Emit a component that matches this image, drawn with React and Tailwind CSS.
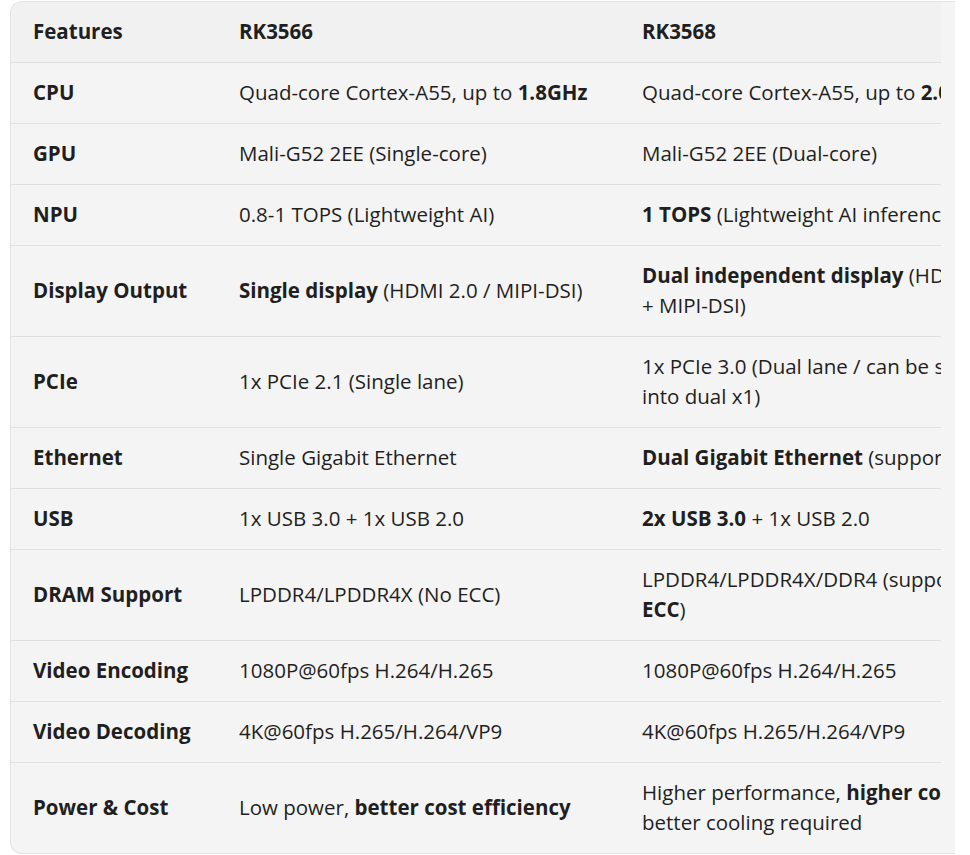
import React from 'react';

const rows = [
  {
    feature: 'CPU',
    a: <>Quad-core Cortex-A55, up to <b className="font-bold">1.8GHz</b></>,
    b: <>Quad-core Cortex-A55, up to <b className="font-bold">2.0GHz</b></>,
  },
  { feature: 'GPU', a: 'Mali-G52 2EE (Single-core)', b: 'Mali-G52 2EE (Dual-core)' },
  {
    feature: 'NPU',
    a: '0.8-1 TOPS (Lightweight AI)',
    b: <><b className="font-bold">1 TOPS</b> (Lightweight AI inference)</>,
  },
  {
    feature: 'Display Output',
    a: <><b className="font-bold">Single display</b> (HDMI 2.0 / MIPI-DSI)</>,
    b: <><b className="font-bold">Dual independent display</b> (HDMI 2.0<br />+ MIPI-DSI)</>,
  },
  {
    feature: 'PCIe',
    a: '1x PCIe 2.1 (Single lane)',
    b: <>1x PCIe 3.0 (Dual lane / can be split<br />into dual x1)</>,
  },
  {
    feature: 'Ethernet',
    a: 'Single Gigabit Ethernet',
    b: <><b className="font-bold">Dual Gigabit Ethernet</b> (supports TSN)</>,
  },
  {
    feature: 'USB',
    a: '1x USB 3.0 + 1x USB 2.0',
    b: <><b className="font-bold">2x USB 3.0</b> + 1x USB 2.0</>,
  },
  {
    feature: 'DRAM Support',
    a: 'LPDDR4/LPDDR4X (No ECC)',
    b: <>LPDDR4/LPDDR4X/DDR4 (supports<br /><b className="font-bold">ECC</b>)</>,
  },
  { feature: 'Video Encoding', a: '1080P@60fps H.264/H.265', b: '1080P@60fps H.264/H.265' },
  { feature: 'Video Decoding', a: '4K@60fps H.265/H.264/VP9', b: '4K@60fps H.265/H.264/VP9' },
  {
    feature: 'Power & Cost',
    a: <>Low power, <b className="font-bold">better cost efficiency</b></>,
    b: <>Higher performance, <b className="font-bold">higher cost</b>,<br />better cooling required</>,
  },
];

export default function App() {
  return (
    <div className="min-h-screen bg-white pt-[1px] font-['Open_Sans',sans-serif] text-[20.5px] leading-[30px] text-[#1f1f1f]">
      {/* Table card, cut off at the right edge */}
      <div className="ml-[10px] w-[945px] overflow-hidden rounded-l-[12px] border-y border-l border-[#e3e3e3] bg-[#f4f4f4]">
        <div className="w-[930px] overflow-hidden">
          <table className="w-[1012px] table-fixed border-collapse text-left">
            <colgroup>
              <col className="w-[206px]" />
              <col className="w-[403px]" />
              <col className="w-[403px]" />
            </colgroup>
            <thead>
              <tr className="border-b border-[#e0e0e0] bg-[#f1f1f1]">
                <th className="px-[22px] pt-[14px] pb-[16px] font-bold">Features</th>
                <th className="px-[22px] pt-[14px] pb-[16px] font-bold">RK3566</th>
                <th className="px-[22px] pt-[14px] pb-[16px] font-bold">RK3568</th>
              </tr>
            </thead>
            <tbody>
              {rows.map((r, i) => (
                <tr
                  key={r.feature}
                  className={i < rows.length - 1 ? 'border-b border-[#e0e0e0]' : ''}
                >
                  <td className="px-[22px] pt-[14px] pb-[16px] align-middle font-bold">{r.feature}</td>
                  <td className="whitespace-nowrap px-[22px] pt-[14px] pb-[16px] align-middle">{r.a}</td>
                  <td className="whitespace-nowrap px-[22px] pt-[14px] pb-[16px] align-middle">{r.b}</td>
                </tr>
              ))}
            </tbody>
          </table>
        </div>
      </div>
    </div>
  );
}
